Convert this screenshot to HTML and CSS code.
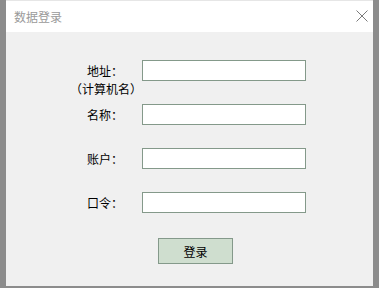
FILE: index.html
```html
<!DOCTYPE html>
<html lang="zh-CN">
<head>
    <meta charset="UTF-8">
    <title>数据登录</title>
    <link rel="stylesheet" href="styles.css">
</head>
<body>
    <div class="dialog">
        <div class="title-bar">
            <span class="title">数据登录</span>
            <svg class="close" width="12" height="12" viewBox="0 0 12 12">
                <path d="M0.5 0.5 L11.5 11.5 M11.5 0.5 L0.5 11.5" stroke="#7a7a7a" stroke-width="1" fill="none"/>
            </svg>
        </div>
        <div class="content">
            <div class="form">
                <label class="label" for="addr">地址：<span class="sub">（计算机名）</span></label>
                <input class="field" type="text" id="addr">

                <label class="label" for="name">名称：</label>
                <input class="field" type="text" id="name">

                <label class="label" for="user">账户：</label>
                <input class="field" type="text" id="user">

                <label class="label" for="pass">口令：</label>
                <input class="field" type="password" id="pass">
            </div>
            <div class="actions">
                <button class="login-btn">登录</button>
            </div>
        </div>
    </div>
</body>
</html>
```

FILE: styles.css
```css
body {
    margin: 0;
    background-color: #8c8c8c;
    font-family: "Noto Sans CJK SC", "SimSun", sans-serif;
    font-size: 12px;
    color: #000;
    height: 288px;
    overflow: hidden;
    text-spacing-trim: space-all;
}

.dialog {
    width: 367px;
    height: 286px;
    margin: 0 0 0 6px;
    border-top: 1px solid #e6e6e6;
    background-color: #f0f0f0;
    box-sizing: border-box;
}

.title-bar {
    height: 31px;
    background-color: #fff;
    display: flex;
    align-items: center;
    justify-content: space-between;
    padding: 0 5px 0 8px;
}

.title {
    color: #9a9a9a;
    font-size: 12px;
    line-height: 16px;
    padding-top: 1px;
}

.close {
    display: block;
    margin-top: -2px;
}

.content {
    padding: 28px 0 0 64px;
}

.form {
    display: grid;
    grid-template-columns: 70px 164px;
    grid-template-rows: repeat(4, 21px);
    column-gap: 2px;
    row-gap: 23px;
}

.label {
    text-align: center;
    line-height: 21px;
    white-space: nowrap;
}

.label .sub {
    display: block;
    line-height: 16px;
    font-feature-settings: "halt" 0, "fwid" 1;
}

.field {
    width: 164px;
    height: 21px;
    box-sizing: border-box;
    border: 1px solid #84998a;
    background-color: #fff;
    margin: 0;
    padding: 0 3px;
    font-size: 12px;
    outline: none;
}

.actions {
    padding: 25px 0 0 88px;
}

.login-btn {
    width: 75px;
    height: 26px;
    box-sizing: border-box;
    border: 1px solid #84998a;
    background-color: #cfdecf;
    font-family: "Noto Sans CJK SC", "SimSun", sans-serif;
    font-size: 12px;
    color: #000;
    padding: 0;
    cursor: pointer;
}
```
